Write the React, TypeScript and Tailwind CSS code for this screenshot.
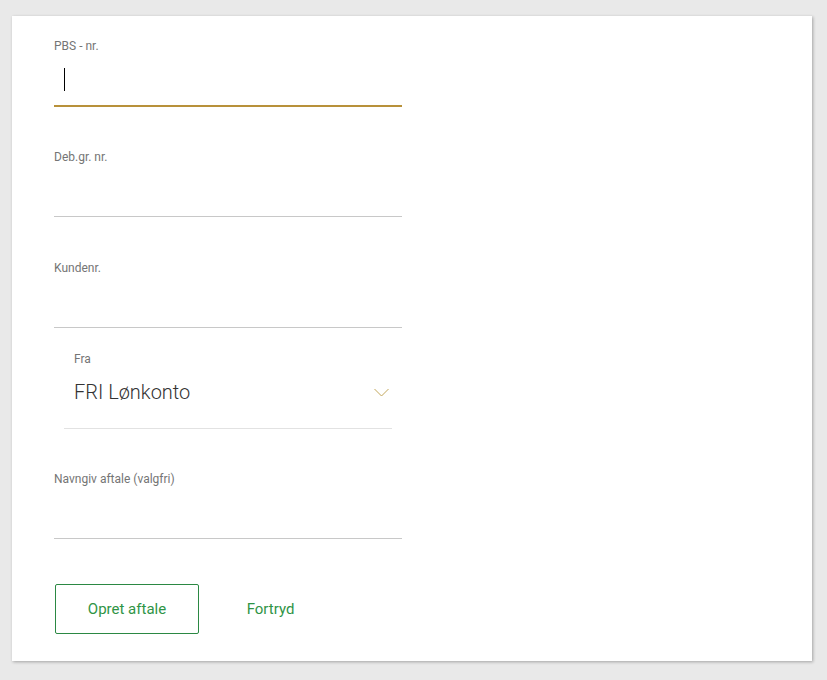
import React from "react";

const font = { fontFamily: "Roboto, 'Liberation Sans', sans-serif" };

function Field({ label, focused, mb }: { label: string; focused?: boolean; mb: string }) {
  return (
    <div className={`w-[348px] ${mb}`}>
      <div className="h-[16px] text-[12px] leading-[16px] text-[#757575]">{label}</div>
      <div
        className={
          focused
            ? "h-[53px] border-b-2 border-[#b8913a] pl-[10px] pt-[14px]"
            : "h-[52px] border-b border-[#c8c8c8]"
        }
      >
        {focused && <span className="block h-[23px] w-px bg-black" />}
      </div>
    </div>
  );
}

export default function App() {
  return (
    <div className="min-h-[680px] w-full bg-[#e9e9e9] pt-[16px] pl-[12px]" style={font}>
      <div className="w-[800px] h-[645px] bg-white shadow-[1px_1px_3px_rgba(0,0,0,0.3)] pl-[42px] pt-[22px]">
        <Field label="PBS - nr." focused mb="mb-[42px]" />
        <Field label="Deb.gr. nr." mb="mb-[43px]" />
        <Field label="Kundenr." mb="mb-[23px]" />
        <div className="ml-[10px] w-[328px] border-b border-[#e2e2e2] pl-[10px] pb-[22px] mb-[42px]">
          <div className="h-[16px] text-[12px] leading-[16px] text-[#757575]">Fra</div>
          <div className="mt-[11px] flex h-[28px] items-center justify-between pr-[3px]">
            <span className="text-[20px] font-light leading-[28px] text-[#333333]">FRI Lønkonto</span>
            <svg width="15" height="9" viewBox="0 0 15 9" fill="none">
              <polyline points="0.5,1 7.5,8 14.5,1" stroke="#c2a65a" strokeWidth="1" />
            </svg>
          </div>
        </div>
        <Field label="Navngiv aftale (valgfri)" mb="mb-[45px]" />
        <div className="flex">
          <button className="ml-px h-[50px] w-[144px] rounded-[2px] border border-[#2b8843] text-[15px] text-[#2f9446]">
            Opret aftale
          </button>
          <button className="h-[50px] w-[143px] text-[15px] text-[#2f9446]">Fortryd</button>
        </div>
      </div>
    </div>
  );
}
